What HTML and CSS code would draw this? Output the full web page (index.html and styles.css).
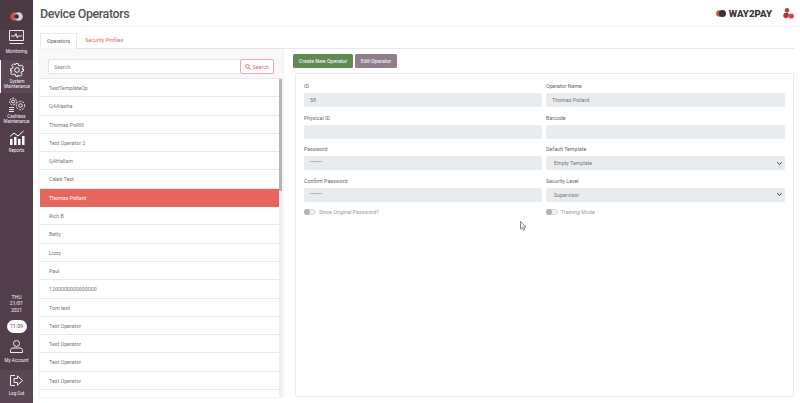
FILE: index.html
```html
<!DOCTYPE html>
<html lang="en">
<head>
<meta charset="utf-8">
<title>Device Operators</title>
<link rel="stylesheet" href="styles.css">
</head>
<body>
<div class="app">
  <aside class="sidebar">
    <div class="brand"><svg width="13" height="9" viewBox="0 0 13 9"><circle cx="4.500" cy="4.500" r="4.300" fill="#c8504e"/><circle cx="8.500" cy="4.500" r="4.300" fill="#d9d2d5"/><circle cx="6.500" cy="4.500" r="2.300" fill="#3a2b35"/></svg></div>
    <a class="nav-item monitoring">
      <svg width="15" height="14" viewBox="0 0 15 14" fill="none" stroke="#fff" stroke-width=".9"><path d="M.5.500h14v10H.5zM.5 13.500h14"/><path d="M2 6h4l1-2.500 1.300 4.500 1-2H13"/></svg>
      <span>Monitoring</span>
    </a>
    <a class="nav-item active">
      <svg width="14" height="14" viewBox="0 0 24 24" fill="none" stroke="#fff" stroke-width="1.700"><circle cx="12" cy="12" r="4"/><path d="M10 1h4l.7 3.200 2.500 1 2.800-1.700 2.800 2.800-1.700 2.800 1 2.500L23 10v4l-3.200.7-1 2.500 1.700 2.800-2.800 2.800-2.800-1.700-2.500 1L14 23h-4l-.7-3.200-2.500-1L4 20.500l-2.800-2.800L3 15l-1-2.500L1 14v-4l3.200-.7 1-2.500L3.500 4l2.800-2.800L9 3l1-2z"/></svg>
      <span>System<br>Maintenance</span>
    </a>
    <a class="nav-item cashless">
      <svg width="18" height="15" viewBox="0 0 18 15" fill="none" stroke="#fff" stroke-width=".9"><circle cx="5" cy="4.500" r="1.500"/><circle cx="5" cy="4.500" r="3.400" stroke-dasharray="2 1"/><circle cx="12.500" cy="8.500" r="1.800"/><circle cx="12.500" cy="8.500" r="4.200" stroke-dasharray="2 1"/><path d="M1 10.500h5M1 12.500h5M1 14.500h5"/></svg>
      <span>Cashless<br>Maintenance</span>
    </a>
    <a class="nav-item reports">
      <svg width="16" height="15" viewBox="0 0 16 15" fill="#fff"><rect x="1" y="9" width="2.500" height="6"/><rect x="5" y="7" width="2.500" height="8"/><rect x="9" y="9" width="2.500" height="6"/><rect x="13" y="6" width="2.500" height="9"/><path d="M1 6.500l4-3.500 4 3 5.500-5" fill="none" stroke="#fff"/></svg>
      <span>Reports</span>
    </a>
    <div class="spacer"></div>
    <div class="date">THU<br>21/01<br>2021</div>
    <div class="clock">11:09</div>
    <a class="nav-item account">
      <svg width="13" height="13" viewBox="0 0 13 13" fill="none" stroke="#fff" stroke-width=".9"><circle cx="6.500" cy="3.500" r="3"/><path d="M.5 12.500v-2c0-1.500 1-2.500 2.500-2.500h7c1.500 0 2.500 1 2.500 2.500v2z"/></svg>
      <span>My Account</span>
    </a>
    <a class="nav-item logout">
      <svg width="13" height="11" viewBox="0 0 13 11" fill="none" stroke="#fff" stroke-width=".9"><path d="M5 .500H.5v10H5M4 3.500h3.500V.800L12.500 5.500l-5 4.700V7.500H4z"/></svg>
      <span>Log Out</span>
    </a>
  </aside>
  <main class="main">
    <header class="topbar">
      <h1>Device Operators</h1>
      <div class="logos">
        <svg class="way-mark" width="10" height="7" viewBox="0 0 10 7"><circle cx="3.500" cy="3.500" r="3.300" fill="#c8504e"/><circle cx="6.500" cy="3.500" r="3.500" fill="#3a3035"/></svg>
        <span class="wordmark">WAY2PAY</span>
        <svg class="corner-mark" width="11" height="11" viewBox="0 0 11 11"><circle cx="4" cy="2.300" r="2.200" fill="#c9343c"/><circle cx="3" cy="7.500" r="2.700" fill="#c9343c"/><circle cx="8.300" cy="8" r="2.600" fill="#d2454c"/><circle cx="4.200" cy="6" r="1.300" fill="#5a3a6a"/></svg>
      </div>
    </header>
    <nav class="tabs">
      <a class="tab current">Operators</a>
      <a class="tab">Security Profiles</a>
    </nav>
    <section class="content">
      <div class="list-panel">
        <form class="search">
          <input class="search-input" placeholder="Search">
          <button class="search-btn" type="button"><svg width="6" height="6" viewBox="0 0 8 8" fill="none" stroke="#e2686a" stroke-width="1.300"><circle cx="3.200" cy="3.200" r="2.400"/><path d="M5 5l2.600 2.600"/></svg>Search</button>
        </form>
        <div class="list-wrap">
          <ul class="op-list">
            <li>TestTemplateOp</li>
            <li>QAAlasha</li>
            <li>Thomas Pollllll</li>
            <li>Test Operator 2</li>
            <li>QAHallam</li>
            <li>Caleb Test</li>
            <li class="selected">Thomas Pollard</li>
            <li>Rich B</li>
            <li>Betty</li>
            <li>Lizzy</li>
            <li>Paul</li>
            <li>1200000000000000</li>
            <li>Tom test</li>
            <li>Test Operator</li>
            <li>Test Operator</li>
            <li>Test Operator</li>
            <li>Test Operator</li>
          </ul>
          <div class="scrollbar"><div class="thumb"></div></div>
        </div>
      </div>
      <div class="detail">
        <div class="actions">
          <button class="btn green" type="button">Create New Operator</button>
          <button class="btn mauve" type="button">Edit Operator</button>
        </div>
        <div class="form-card">
          <div class="form-grid">
            <div class="field"><label>ID</label><div class="control">58</div></div>
            <div class="field"><label>Operator Name</label><div class="control">Thomas Pollard</div></div>
            <div class="field"><label>Physical ID</label><div class="control"></div></div>
            <div class="field"><label>Barcode</label><div class="control"></div></div>
            <div class="field"><label>Password</label><div class="control dots">•••••••</div></div>
            <div class="field"><label>Default Template</label><div class="control select">Empty Template<svg width="5" height="3" viewBox="0 0 5 3" fill="none" stroke="#444" stroke-width="1"><path d="M.3.300 2.500 2.500 4.700.300"/></svg></div></div>
            <div class="field"><label>Confirm Password</label><div class="control dots">•••••••</div></div>
            <div class="field"><label>Security Level</label><div class="control select">Supervisor<svg width="5" height="3" viewBox="0 0 5 3" fill="none" stroke="#444" stroke-width="1"><path d="M.3.300 2.500 2.500 4.700.300"/></svg></div></div>
            <div class="toggle-row"><span class="toggle"></span>Show Original Password?</div>
            <div class="toggle-row"><span class="toggle"></span>Training Mode</div>
          </div>
        </div>
      </div>
    </section>
  </main>
</div>
<svg class="cursor" width="7" height="10" viewBox="0 0 7 10"><path d="M.5.500v7.500l1.800-1.600 1.200 2.800 1.300-.6-1.200-2.700H6z" fill="#fff" stroke="#555" stroke-width=".7"/></svg>
</body>
</html>
```
FILE: styles.css
```css
* { box-sizing: border-box; }
html, body { margin: 0; height: 100%; overflow: hidden; }
body { font-family: Roboto, "Liberation Sans", sans-serif; color: #777; background: #fff; }
.app { display: flex; height: 403px; width: 800px; }
.sidebar { width: 33px; flex: none; background: #513e4a; display: flex; flex-direction: column; align-items: center; color: #f4f1f3; }
.brand { height: 30px; width: 100%; display: flex; align-items: center; justify-content: center; padding-top: 2px; background: #4b3944; }
.nav-item { display: flex; flex-direction: column; align-items: center; width: 100%; font-size: 4.500px; line-height: 5.200px; text-align: center; }
.monitoring { height: 30px; gap: 5px; }
.active { height: 33px; padding-top: 3px; gap: 2px; background: #5a4753; border-left: 1px solid #fff; }
.cashless { height: 34px; padding-top: 4px; gap: 2px; }
.reports { height: 30px; padding-top: 3px; gap: 3px; }
.spacer { flex: 1; }
.date { font-size: 5px; line-height: 6.500px; text-align: center; margin-bottom: 7px; }
.clock { width: 20px; height: 13px; border-radius: 7px; background: #fff; color: #533f4b; font-size: 5.300px; line-height: 13px; text-align: center; margin-bottom: 7px; }
.account { height: 30px; gap: 5px; }
.logout { height: 33px; padding-top: 5px; background: #5a4753; gap: 5px; }
.main { flex: 1; min-width: 0; display: flex; flex-direction: column; padding: 0 6px 6px 7px; }
.topbar { height: 27px; flex: none; display: flex; align-items: center; justify-content: space-between; border-bottom: 1px solid #f1f1f1; margin-right: -6px; padding-right: 6px; }
h1 { margin: 0; font-size: 12.500px; font-weight: 500; letter-spacing: -.4px; color: #555; }
.logos { display: flex; align-items: center; }
.wordmark { font-size: 9.700px; font-weight: 900; color: #3f363b; margin-left: 3px; }
.corner-mark { margin-left: 11px; }
.tabs { display: flex; height: 22px; flex: none; padding-top: 6px; border-bottom: 1px solid #e8e8e8; }
.tab { font-size: 5.300px; line-height: 15px; padding: 0 7px; color: #e2686a; }
.tab.current { color: #666; border: 1px solid #eaeaea; border-bottom: 1px solid #fff; height: 16px; line-height: 14px; padding: 0 6px; margin-right: 1px; }
.content { flex: 1; min-height: 0; display: flex; gap: 10px; }
.list-panel { width: 243px; flex: none; display: flex; flex-direction: column; background: #f8f8f8; box-shadow: 0 0 2px #ddd; }
.search { display: flex; height: 29px; flex: none; padding: 10px 9px 4px 8px; }
.search-input { flex: 1; min-width: 0; height: 15px; border: 1px solid #e4e4e4; border-right: 0; border-radius: 2px 0 0 2px; padding: 0 5px; font: 5.300px Roboto, sans-serif; outline: 0; }
.search-input::placeholder { color: #888; }
.search-btn { width: 34px; height: 15px; border: 1px solid #eeaaaa; border-radius: 2px; background: #fff; color: #e2686a; font: 5.300px Roboto, sans-serif; display: flex; align-items: center; justify-content: center; gap: 1.500px; padding: 0; }
.list-wrap { flex: 1; min-height: 0; display: flex; overflow: hidden; padding-right: 1px; background: #f8f8f8; border-top: 1px solid #e8e8e8; }
.op-list { list-style: none; margin: 0; padding: 0; flex: 1; overflow: hidden; background: #fff; }
.op-list li { height: 18.300px; line-height: 18px; font-size: 5.300px; padding-left: 9px; border-bottom: 1px solid #e8e8e8; background: #fff; }
.op-list li.selected { background: #e6665e; color: #fff; border-color: #e6665e; }
.scrollbar { width: 3px; background: #f0f0f0; flex: none; }
.thumb { height: 112px; background: #b4b4b4; }
.detail { flex: 1; min-width: 0; display: flex; flex-direction: column; padding-top: 5px; }
.actions { display: flex; gap: 2px; height: 19px; flex: none; }
.btn { height: 14px; border: 0; border-radius: 1.500px; color: #f0f0f0; font: 500 5.200px Roboto, sans-serif; padding: 0; }
.green { width: 60px; background: #5f8a52; }
.mauve { width: 42px; background: #917e8c; }
.form-card { flex: 1; border: 1px solid #eaeaea; border-radius: 2px; margin-left: 2px; padding: 8px 8px; }
.form-grid { display: grid; grid-template-columns: 238px 239px; column-gap: 4px; }
.field { height: 31.500px; }
.field label { display: block; font-size: 5.300px; line-height: 8px; height: 11px; color: #666; }
.control { height: 14px; background: #e9ecef; border-radius: 1.500px; font-size: 5.300px; line-height: 14px; padding-left: 6px; display: flex; align-items: center; justify-content: space-between; padding-right: 3px; }
.select { padding-left: 8px; }
.dots { font-size: 4.500px; letter-spacing: .2px; color: #777; }
.toggle-row { display: flex; align-items: center; gap: 3px; font-size: 5.300px; height: 10px; color: #999; margin-top: -1px; }
.toggle { width: 12px; height: 6px; border-radius: 3px; background: #f0f0f0; border: 1px solid #ddd; position: relative; }
.toggle::before { content: ""; position: absolute; left: -1px; top: -1px; width: 6px; height: 6px; border-radius: 50%; background: #adb5bd; }
.cursor { position: absolute; left: 520px; top: 221px; }
```
